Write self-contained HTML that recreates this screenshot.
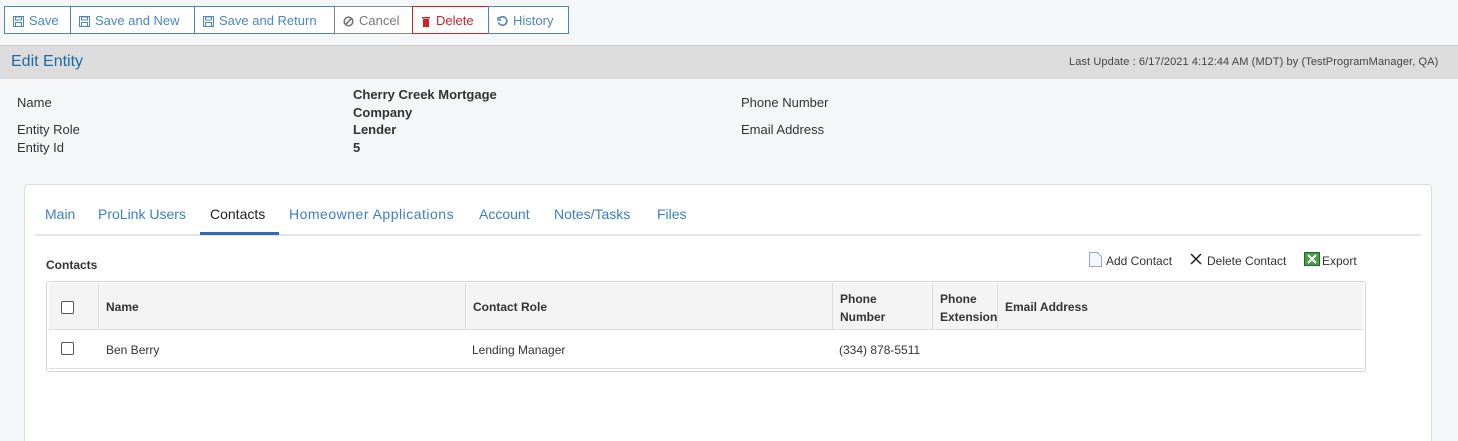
<!DOCTYPE html>
<html style="height:441px;overflow:hidden"><head><style>
body{margin:0;width:1458px;height:441px;background:#f5f6f8;font-family:"Liberation Sans",sans-serif;position:relative;overflow:hidden;color:#333}
.a{position:absolute;white-space:nowrap}
.tb{position:absolute;top:6px;border:1px solid #4a86c5;background:#fff;color:#4a86c5;font-size:13px;line-height:28px;box-sizing:border-box;height:28px;padding-left:8px}
.tb svg{vertical-align:-2px;margin-right:5px}
.tab{position:absolute;top:206px;font-size:14px;color:#3c7fc2}
.cb{position:absolute;width:11px;height:11px;border:1px solid #555;border-radius:2px;background:#fff}
.hl{position:absolute;top:283px;width:1px;height:46px;background:#dcdcdc}
.hd{position:absolute;font-size:12px;font-weight:bold;color:#333}
.cell{position:absolute;font-size:12px;color:#333}
</style></head><body>
<div class="tb" style="left:4px;width:67px"><svg width="11" height="11" viewBox="0 0 11 11"><rect x=".5" y=".5" width="10" height="10" fill="none" stroke="#4a86c5"/><rect x="2.5" y="1" width="6" height="3" fill="none" stroke="#4a86c5"/><rect x="2.5" y="6.5" width="6" height="4" fill="none" stroke="#4a86c5"/></svg>Save</div>
<div class="tb" style="left:70px;width:125px"><svg width="11" height="11" viewBox="0 0 11 11"><rect x=".5" y=".5" width="10" height="10" fill="none" stroke="#4a86c5"/><rect x="2.5" y="1" width="6" height="3" fill="none" stroke="#4a86c5"/><rect x="2.5" y="6.5" width="6" height="4" fill="none" stroke="#4a86c5"/></svg>Save and New</div>
<div class="tb" style="left:194px;width:141px"><svg width="11" height="11" viewBox="0 0 11 11"><rect x=".5" y=".5" width="10" height="10" fill="none" stroke="#4a86c5"/><rect x="2.5" y="1" width="6" height="3" fill="none" stroke="#4a86c5"/><rect x="2.5" y="6.5" width="6" height="4" fill="none" stroke="#4a86c5"/></svg>Save and Return</div>
<div class="tb" style="left:334px;width:79px;border-color:#888;color:#777"><svg width="11" height="11" viewBox="0 0 11 11"><circle cx="5.5" cy="5.5" r="4.3" fill="none" stroke="#777" stroke-width="1.6"/><path d="M2.5 8.5L8.5 2.5" stroke="#777" stroke-width="1.6"/></svg>Cancel</div>
<div class="tb" style="left:412px;width:77px;border-color:#d0212b;color:#d0212b"><svg width="10" height="11" viewBox="0 0 10 11"><rect x="1" y="1" width="8" height="1.5" fill="#d0212b"/><rect x="2" y="3" width="6" height="8" fill="#d0212b"/></svg>Delete</div>
<div class="tb" style="left:488px;width:81px"><svg width="11" height="11" viewBox="0 0 11 11"><path d="M2 2.5A4.3 4.3 0 1 1 1.5 6.5" fill="none" stroke="#4a86c5" stroke-width="1.6"/><path d="M1 1v3h3" fill="none" stroke="#4a86c5" stroke-width="1.4"/></svg>History</div>
<div class="a" style="left:0;top:45px;width:1458px;height:33px;background:#dcdcdc;border-top:1px solid #ccc"></div>
<div class="a" style="left:11px;top:53px;font-size:16px;color:#1e6aa8">Edit Entity</div>
<div class="a" style="left:1069px;top:56px;font-size:11px;color:#444;letter-spacing:0.1px">Last Update : 6/17/2021 4:12:44 AM (MDT) by (TestProgramManager, QA)</div>
<div class="a" style="left:17px;top:95px;font-size:13px">Name</div>
<div class="a" style="left:17px;top:122px;font-size:13px">Entity Role</div>
<div class="a" style="left:17px;top:140px;font-size:13px">Entity Id</div>
<div class="a" style="left:353px;top:86px;font-size:13px;font-weight:bold;line-height:18px">Cherry Creek Mortgage<br>Company</div>
<div class="a" style="left:353px;top:122px;font-size:13px;font-weight:bold">Lender</div>
<div class="a" style="left:353px;top:140px;font-size:13px;font-weight:bold">5</div>
<div class="a" style="left:741px;top:95px;font-size:13px">Phone Number</div>
<div class="a" style="left:741px;top:122px;font-size:13px">Email Address</div>
<div class="a" style="left:24px;top:184px;width:1406px;height:270px;background:#fff;border:1px solid #ddd;border-radius:4px"></div>
<div class="tab" style="left:45px">Main</div>
<div class="tab" style="left:98px">ProLink Users</div>
<div class="tab" style="left:210px;color:#222">Contacts</div>
<div class="tab" style="left:289px;letter-spacing:0.5px">Homeowner Applications</div>
<div class="tab" style="left:479px">Account</div>
<div class="tab" style="left:554px">Notes/Tasks</div>
<div class="tab" style="left:657px">Files</div>
<div class="a" style="left:35px;top:234px;width:1386px;height:2px;background:#e3e3e3"></div>
<div class="a" style="left:200px;top:232px;width:79px;height:3px;background:#2e6db4"></div>
<div class="a" style="left:46px;top:258px;font-size:12px;font-weight:bold">Contacts</div>
<svg class="a" style="left:1089px;top:252px" width="13" height="15" viewBox="0 0 13 15"><path d="M.5.5h8l4 4v10H.5z" fill="#f4f8fc" stroke="#9ab"/></svg>
<div class="a" style="left:1106px;top:254px;font-size:12px">Add Contact</div>
<svg class="a" style="left:1190px;top:253px" width="12" height="12"><path d="M1 1L11 11M11 1L1 11" stroke="#222" stroke-width="1.5"/></svg>
<div class="a" style="left:1207px;top:254px;font-size:12px">Delete Contact</div>
<svg class="a" style="left:1304px;top:252px" width="16" height="14"><rect x=".5" y=".5" width="15" height="13" fill="#4a9a4a" stroke="#1c6b1c"/><path d="M4 3L12 11M12 3L4 11" stroke="#fff" stroke-width="2"/></svg>
<div class="a" style="left:1322px;top:254px;font-size:12px">Export</div>
<div class="a" style="left:46px;top:281px;width:1318px;height:89px;border:1px solid #d5d5d5;border-radius:3px;background:#fff"></div>
<div class="a" style="left:49px;top:283px;width:1314px;height:46px;background:#f4f4f4;border-bottom:1px solid #ddd"></div>
<div class="hl" style="left:98px"></div><div class="hl" style="left:465px"></div><div class="hl" style="left:832px"></div><div class="hl" style="left:932px"></div><div class="hl" style="left:997px"></div>
<div class="cb" style="left:61px;top:301px"></div>
<div class="hd" style="left:106px;top:300px">Name</div>
<div class="hd" style="left:473px;top:300px">Contact Role</div>
<div class="hd" style="left:840px;top:290px;line-height:18px">Phone<br>Number</div>
<div class="hd" style="left:940px;top:290px;line-height:18px;width:57px;overflow:hidden">Phone<br>Extension</div>
<div class="hd" style="left:1005px;top:300px">Email Address</div>
<div class="a" style="left:49px;top:368px;width:1314px;height:1px;background:#ddd"></div>
<div class="cb" style="left:61px;top:342px"></div>
<div class="cell" style="left:106px;top:343px">Ben Berry</div>
<div class="cell" style="left:472px;top:343px">Lending Manager</div>
<div class="cell" style="left:839px;top:343px">(334) 878-5511</div>
</body></html>
